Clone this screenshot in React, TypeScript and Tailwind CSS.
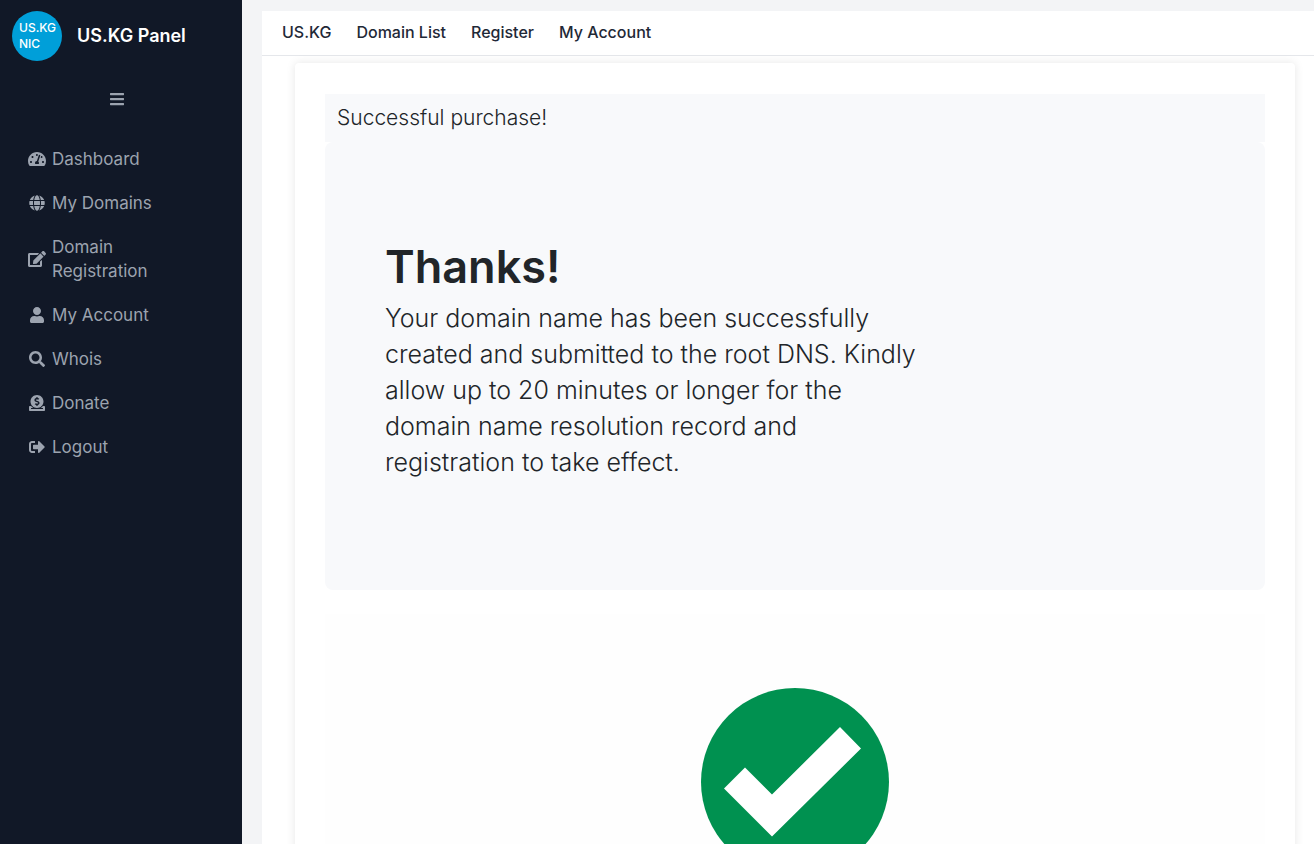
import React from "react";
import {
  FaBars,
  FaDonate,
  FaEdit,
  FaGlobe,
  FaSearch,
  FaSignOutAlt,
  FaTachometerAlt,
  FaUser,
} from "react-icons/fa";

const sideLinks = [
  { label: "Dashboard", icon: FaTachometerAlt },
  { label: "My Domains", icon: FaGlobe },
  { label: "Domain Registration", icon: FaEdit },
  { label: "My Account", icon: FaUser },
  { label: "Whois", icon: FaSearch },
  { label: "Donate", icon: FaDonate },
  { label: "Logout", icon: FaSignOutAlt },
];

const topLinks = ["US.KG", "Domain List", "Register", "My Account"];

const Sidebar = () => {
  return (
    <aside className="w-[242px] shrink-0 bg-[#111827] text-[#9ca3af]">
      <div className="flex items-center gap-[15px] pt-[11px] pl-3">
        <div className="flex h-[50px] w-[50px] items-center rounded-full bg-[#009fd9] pl-[7px] text-xs leading-4 font-medium text-white">
          <span>
            US.KG
            <br />
            NIC
          </span>
        </div>
        <span className="text-lg font-semibold text-white">US.KG Panel</span>
      </div>

      <button
        type="button"
        aria-label="Toggle menu"
        className="mt-[30px] ml-[109px] block"
      >
        <FaBars className="h-4 w-4" />
      </button>

      <nav className="mt-10 flex flex-col gap-5 pr-16 pl-7">
        {sideLinks.map(({ label, icon: Icon }) => (
          <a key={label} href="#" className="flex items-center gap-[6px]">
            <Icon className="h-4 w-[18px] shrink-0" />
            <span className="text-[17px] leading-6">{label}</span>
          </a>
        ))}
      </nav>
    </aside>
  );
};

const SuccessImage = () => {
  return (
    <div className="mt-6 flex justify-center bg-[#fefefe] py-[74px]">
      <svg className="h-[188px] w-[188px]" viewBox="0 0 188 188">
        <circle cx="94" cy="94" r="94" fill="#009150" />
        <path
          d="M23 100.500L44 79.500L71 106.500L139 39L160 60.500L71 148.500Z"
          fill="#fff"
        />
      </svg>
    </div>
  );
};

const App = () => {
  return (
    <div className="flex h-screen overflow-hidden bg-[#f3f4f6] font-['Inter',sans-serif]">
      <Sidebar />

      <main className="ml-5 min-w-0 flex-1 overflow-y-auto pt-[11px] [scrollbar-width:none]">
        <div className="min-h-full bg-white">
          <nav className="flex gap-[25px] border-b border-gray-200 px-5 pt-[9px] pb-[11px] text-base font-medium text-[#1f2937]">
            {topLinks.map((label) => (
              <a key={label} href="#">
                {label}
              </a>
            ))}
          </nav>

          <div className="pt-[7px] pr-[19px] pl-[33px]">
            <section className="rounded bg-white px-[30px] py-[31px] text-[#212529] shadow-[0_0_10px_rgba(0,0,0,0.1)]">
              <header className="bg-[#f8f9fb] px-3 py-[10px] text-[21px] leading-7 font-light">
                Successful purchase!
              </header>
              <div className="rounded-lg bg-[#f8f9fb] px-[60px] pt-24 pb-[110px]">
                <h1 className="text-[45px] leading-[58px] font-semibold">
                  Thanks!
                </h1>
                <p className="mt-1 w-2/3 text-[25px] leading-9 font-light">
                  Your domain name has been successfully created and submitted
                  to the root DNS. Kindly allow up to 20 minutes or longer for
                  the domain name resolution record and registration to take
                  effect.
                </p>
              </div>

              <SuccessImage />
            </section>
          </div>
        </div>
      </main>
    </div>
  );
};

export default App;
